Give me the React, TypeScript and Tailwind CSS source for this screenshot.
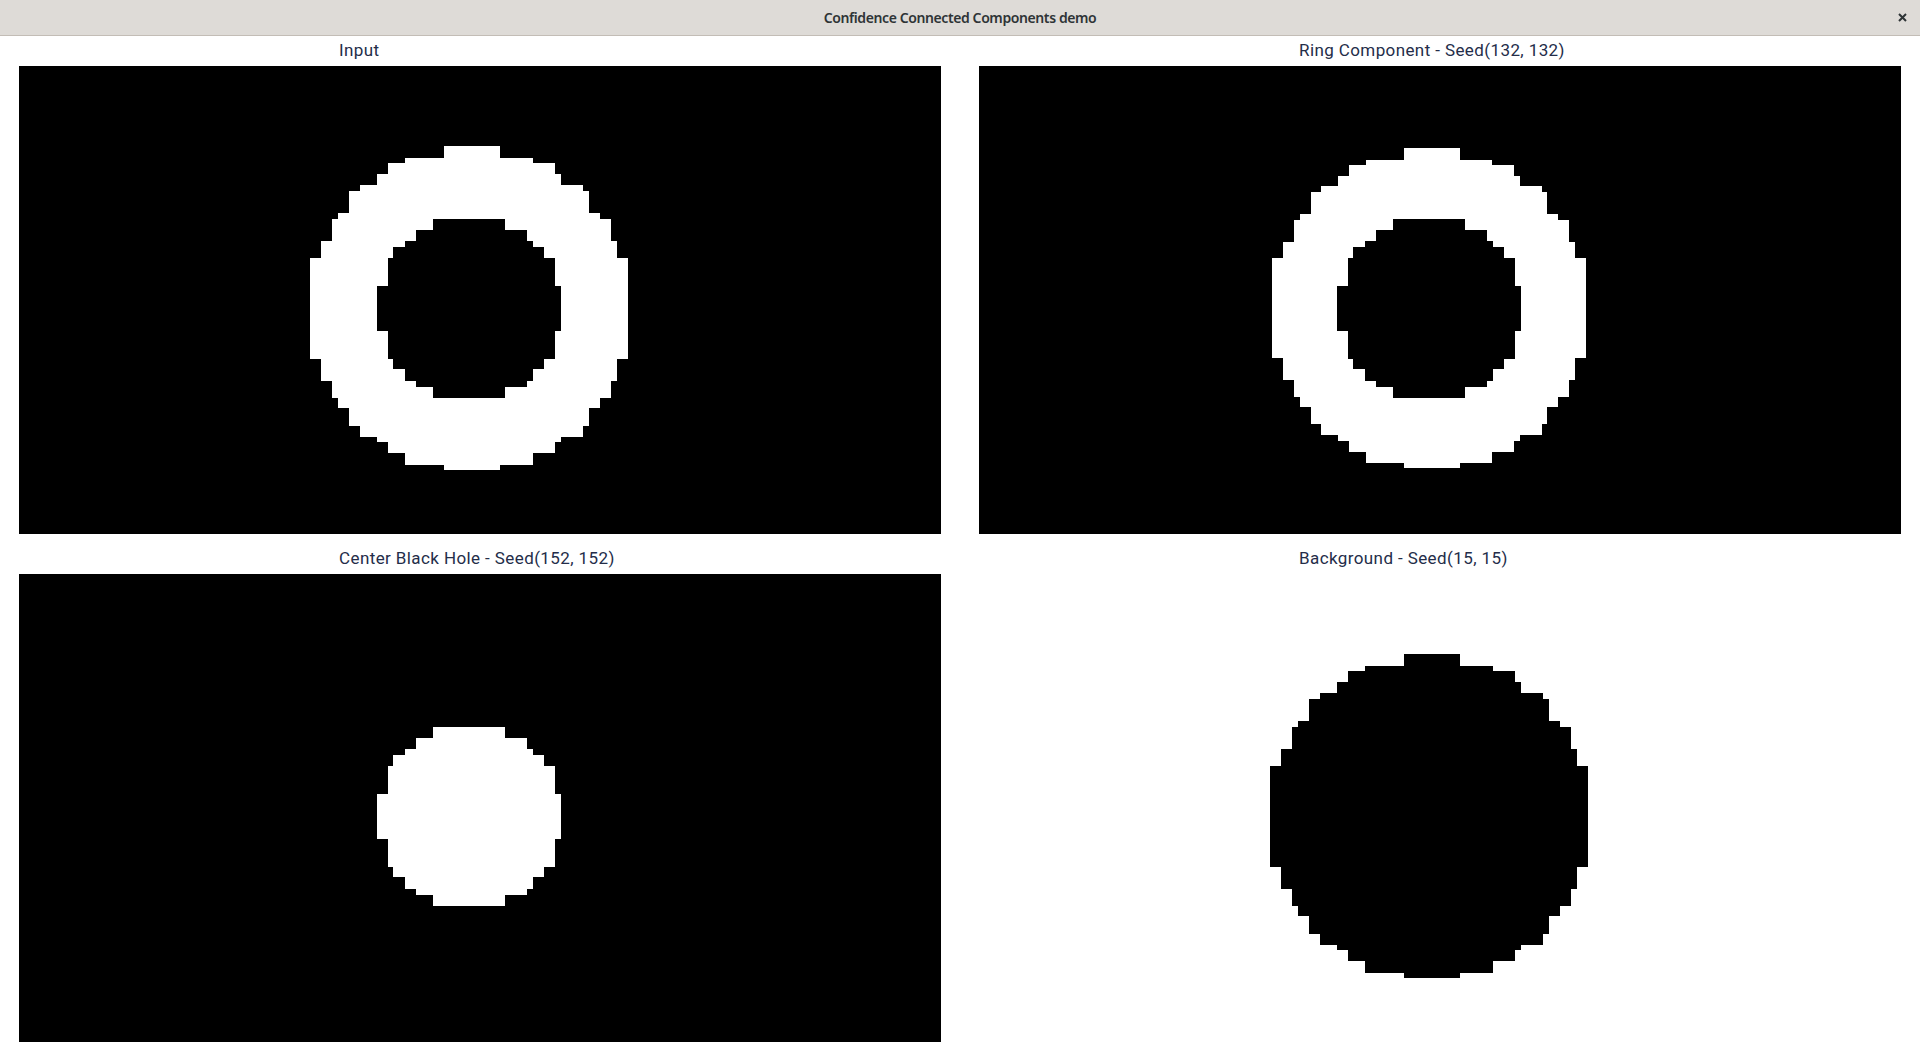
import React from "react";

type Row = [number, number, number, number]; // y0, y1, x0, x1

const OUTER: Row[] = [
  [80, 92, 425, 481],
  [92, 97.3, 386, 514],
  [97.3, 108.3, 369, 536],
  [108.3, 119, 358, 542],
  [119, 125, 341, 564],
  [125, 146.7, 330, 570],
  [146.7, 153, 319, 581],
  [153, 175, 313, 592],
  [175, 191.7, 302, 598],
  [191.7, 293, 291, 609],
  [293, 314.7, 302, 598],
  [314.7, 331.7, 313, 592],
  [331.7, 342.3, 319, 581],
  [342.3, 359.7, 330, 570],
  [359.7, 370.7, 341, 564],
  [370.7, 376.3, 358, 542],
  [376.3, 387.3, 369, 536],
  [387.3, 399, 386, 514],
  [399, 404, 425, 481],
];

const OUTER_RING: Row[] = OUTER.map(([y0, y1, x0, x1]) => [
  242 + (y0 - 242) * 0.988,
  242 + (y1 - 242) * 0.988,
  450 + (x0 - 450) * 0.987,
  450 + (x1 - 450) * 0.987,
]);

const HOLE: Row[] = [
  [153, 164, 414, 486],
  [164, 175, 397, 508],
  [175, 180.7, 386, 514],
  [180.7, 191.7, 374, 525],
  [191.7, 219.7, 369, 536],
  [219.7, 264.7, 358, 542],
  [264.7, 293, 369, 536],
  [293, 303.3, 374, 525],
  [303.3, 314.7, 386, 514],
  [314.7, 320.7, 397, 508],
  [320.7, 331.7, 414, 486],
];

function Rows({ rows, fill }: { rows: Row[]; fill: string }) {
  return (
    <>
      {rows.map(([y0, y1, x0, x1], i) => (
        <rect key={i} x={x0} y={y0} width={x1 - x0} height={y1 - y0} fill={fill} />
      ))}
    </>
  );
}

function Picture({ kind }: { kind: "input" | "ring" | "hole" | "bg" }) {
  const bg = kind === "bg" ? "#ffffff" : "#000000";
  return (
    <div className="w-[922px] h-[468px] shrink-0">
      <svg width="922" height="468" viewBox="0 0 922 468" shapeRendering="crispEdges" className="block">
        <rect x="0" y="0" width="922" height="468" fill={bg} />
        {kind === "input" && (
          <>
            <Rows rows={OUTER} fill="#ffffff" />
            <Rows rows={HOLE} fill="#000000" />
          </>
        )}
        {kind === "ring" && (
          <>
            <Rows rows={OUTER_RING} fill="#ffffff" />
            <Rows rows={HOLE} fill="#000000" />
          </>
        )}
        {kind === "hole" && <Rows rows={HOLE} fill="#ffffff" />}
        {kind === "bg" && <Rows rows={OUTER} fill="#000000" />}
      </svg>
    </div>
  );
}

function Label({ text }: { text: string }) {
  return (
    <div
      className="h-[30px] leading-[28px] pl-[320px] text-[17px] tracking-[0.4px] text-[#242d49] whitespace-nowrap"
      style={{ fontFamily: "Roboto, 'Noto Sans', sans-serif" }}
    >
      {text}
    </div>
  );
}

export default function App() {
  return (
    <div className="w-[1920px] h-[1052px] bg-white overflow-hidden flex flex-col">
      <div className="h-[36px] shrink-0 bg-[#dedbd7] border-b border-[#c3bdb6] relative flex items-center justify-center">
        <span
          className="text-[14px] font-semibold tracking-[-0.4px] text-[#2e3436] leading-none"
          style={{ fontFamily: "'Noto Sans', 'Open Sans', sans-serif" }}
        >
          Confidence Connected Components demo
        </span>
        <div className="absolute right-[13px] top-[13px] w-[9px] h-[9px]">
          <svg width="9" height="9" viewBox="0 0 9 9">
            <path d="M1 1 L8 8 M8 1 L1 8" stroke="#2e3436" strokeWidth="2" strokeLinecap="butt" />
          </svg>
        </div>
      </div>
      <div className="flex px-[19px] gap-[38px]">
        <div className="flex flex-col">
          <Label text="Input" />
          <Picture kind="input" />
          <div className="h-[10px]" />
          <Label text="Center Black Hole - Seed(152, 152)" />
          <Picture kind="hole" />
        </div>
        <div className="flex flex-col">
          <Label text="Ring Component - Seed(132, 132)" />
          <Picture kind="ring" />
          <div className="h-[10px]" />
          <Label text="Background - Seed(15, 15)" />
          <Picture kind="bg" />
        </div>
      </div>
    </div>
  );
}
